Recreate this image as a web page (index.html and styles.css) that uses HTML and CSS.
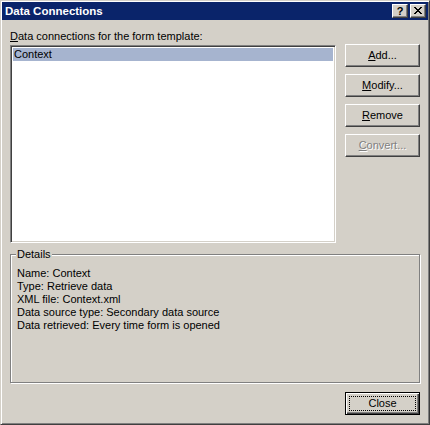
FILE: index.html
```html
<!DOCTYPE html>
<html>
<head>
<meta charset="utf-8">
<title>Data Connections</title>
<link rel="stylesheet" href="styles.css">
</head>
<body>
<div class="window">
  <div class="titlebar">
    <span class="title">Data Connections</span>
    <div class="caption-buttons">
      <span class="cap-btn help">?</span>
      <span class="cap-btn close-x">
        <svg width="8" height="7" viewBox="0 0 8 7"><path d="M0 0h2v1h1v1h2v-1h1v-1h2v1h-1v1h-1v1h-1v1h1v1h1v1h1v1h-2v-1h-1v-1h-2v1h-1v1h-2v-1h1v-1h1v-1h1v-1h-1v-1h-1v-1h-1z" fill="#000"/></svg>
      </span>
    </div>
  </div>
  <div class="client">
    <div class="top">
      <div class="list-col">
        <div class="label"><u>D</u>ata connections for the form template:</div>
        <div class="listbox">
          <div class="item selected">Context</div>
        </div>
      </div>
      <div class="btn-col">
        <div class="btn"><span><u>A</u>dd...</span></div>
        <div class="btn"><span><u>M</u>odify...</span></div>
        <div class="btn"><span><u>R</u>emove</span></div>
        <div class="btn disabled"><span><u>C</u>onvert...</span></div>
      </div>
    </div>
    <fieldset class="group">
      <legend>Details</legend>
      <div class="line">Name: Context</div>
      <div class="line">Type: Retrieve data</div>
      <div class="line">XML file: Context.xml</div>
      <div class="line">Data source type: Secondary data source</div>
      <div class="line">Data retrieved: Every time form is opened</div>
    </fieldset>
    <div class="footer">
      <div class="btn default"><span class="focus">Close</span></div>
    </div>
  </div>
</div>
</body>
</html>
```

FILE: styles.css
```css
html, body {
  margin: 0;
  padding: 0;
  background: #d4d0c8;
}
body {
  font-family: "Liberation Sans", Arial, sans-serif;
  font-size: 11px;
  line-height: 13px;
  color: #000;
}
.window {
  width: 430px;
  height: 425px;
  box-sizing: border-box;
  border: 1px solid;
  border-color: #d4d0c8 #404040 #404040 #d4d0c8;
  box-shadow: inset 1px 1px #fff, inset -1px -1px #808080;
  padding: 1px;
  background: #d4d0c8;
  display: flex;
  flex-direction: column;
}
.titlebar {
  height: 18px;
  background: #0a246a;
  display: flex;
  align-items: center;
  justify-content: space-between;
  padding-left: 3px;
}
.title {
  color: #fff;
  font-weight: bold;
  font-size: 11.5px;
}
.caption-buttons {
  display: flex;
  gap: 2px;
  margin-right: 2px;
}
.cap-btn {
  width: 16px;
  height: 14px;
  box-sizing: border-box;
  background: #d4d0c8;
  border: 1px solid;
  border-color: #fff #404040 #404040 #fff;
  box-shadow: inset -1px -1px #808080;
  display: flex;
  align-items: center;
  justify-content: center;
  font-weight: bold;
  font-size: 11px;
  line-height: 12px;
}
.cap-btn svg {
  display: block;
  margin-top: -1px;
  margin-left: -1px;
}
.client {
  flex: 1;
  padding: 10px 8px 8px 8px;
  display: flex;
  flex-direction: column;
}
.top {
  display: flex;
  gap: 9px;
}
.list-col {
  flex: 1;
  display: flex;
  flex-direction: column;
}
.label {
  height: 13px;
  margin-bottom: 2px;
  white-space: nowrap;
}
.listbox {
  height: 198px;
  box-sizing: border-box;
  background: #fff;
  border: 1px solid;
  border-color: #808080 #fff #fff #808080;
  box-shadow: inset 1px 1px #404040, inset -1px -1px #d4d0c8;
  padding: 2px 2px;
}
.item {
  height: 13px;
  padding-left: 1px;
  line-height: 13px;
}
.item.selected {
  background: #a6b4cf;
}
.btn-col {
  width: 75px;
  margin-top: 14px;
  display: flex;
  flex-direction: column;
  gap: 7px;
}
.btn {
  width: 75px;
  height: 23px;
  box-sizing: border-box;
  background: #d4d0c8;
  border: 1px solid;
  border-color: #fff #404040 #404040 #fff;
  box-shadow: inset -1px -1px #808080;
  display: flex;
  align-items: center;
  justify-content: center;
}
.btn.disabled {
  color: #808080;
  text-shadow: 1px 1px 0 #fff;
}
.group {
  margin: 5px 0 0 0;
  height: 135px;
  box-sizing: border-box;
  border: 1px solid #808080;
  box-shadow: inset 1px 1px #fff, 1px 1px #fff;
  padding: 6px 6px 0 6px;
  width: 410px;
  min-width: 0;
}
.group legend {
  padding: 0 1px;
  margin-left: -1px;
  background: #d4d0c8;
  line-height: 13px;
}
.line {
  height: 13px;
  white-space: nowrap;
}
.footer {
  margin-top: auto;
  display: flex;
  justify-content: flex-end;
}
.btn.default {
  border: 1px solid #000;
  box-shadow: inset 1px 1px #fff, inset -1px -1px #404040, inset -2px -2px #808080;
  padding: 3px;
  align-items: stretch;
  justify-content: stretch;
}
.focus {
  flex: 1;
  border: 1px dotted #000;
  display: flex;
  align-items: center;
  justify-content: center;
}
```
